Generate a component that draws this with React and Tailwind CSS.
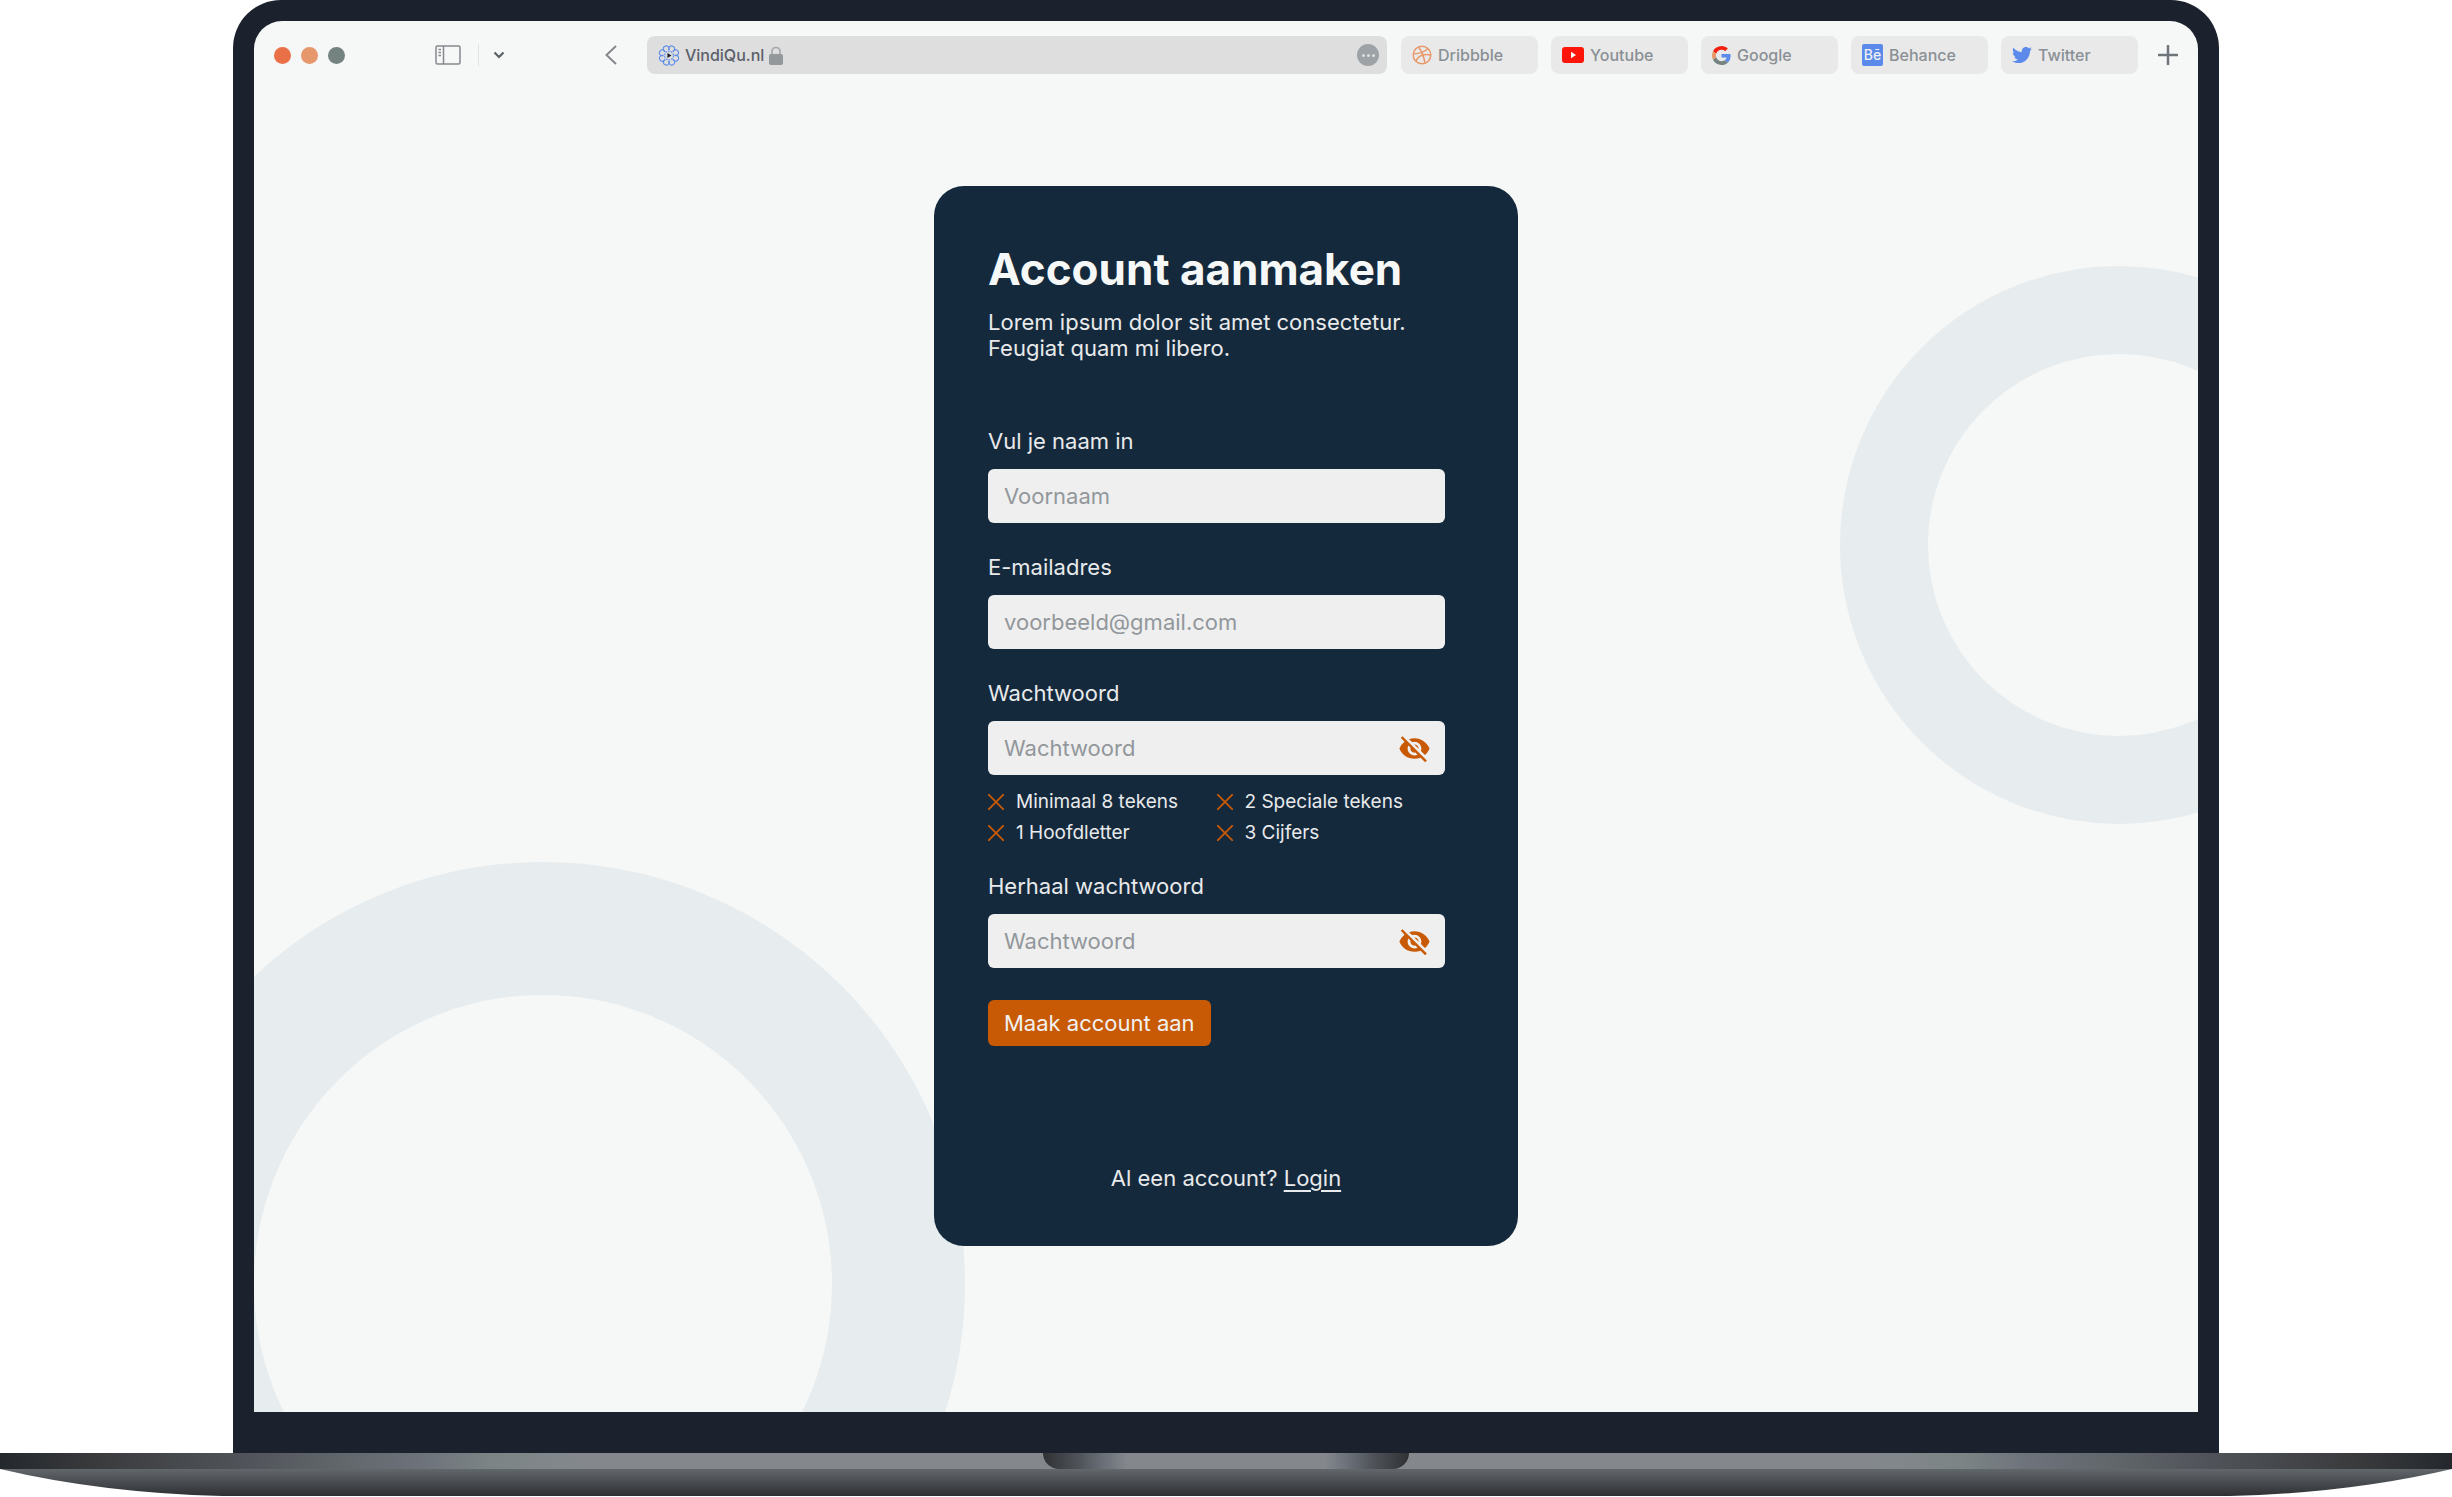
import { useState } from "react";
import { MdVisibilityOff, MdVisibility } from "react-icons/md";
import { FaTwitter } from "react-icons/fa";

function AtomIcon() {
  return (
    <svg viewBox="0 0 24 24" className="h-[23px] w-[22px] shrink-0" fill="none" stroke="#5b8aea" strokeWidth="1.2" aria-hidden="true">
      {[22, 67, 112, 157, 202, 247, 292, 337].map((a) => (
        <path key={a} d="M9.400 6.500C7.800 3 9.500 1 12 1s4.200 2 2.600 5.500" transform={`rotate(${a} 12 12)`} />
      ))}
      <circle cx="12" cy="12" r="4.800" strokeDasharray="2 1" />
      <path d="M10.300 9.200v5.600l4.400-2.800z" fill="#1b212d" stroke="none" />
    </svg>
  );
}

function LockIcon() {
  return (
    <svg viewBox="0 0 14 19" className="ml-[5px] h-[19px] w-[14px] shrink-0" aria-hidden="true">
      <path d="M3 9V5.500a4 4 0 0 1 8 0V9" fill="none" stroke="#a3a7aa" strokeWidth="1.600" />
      <rect y="8" width="14" height="11" rx="2" fill="#93989b" />
    </svg>
  );
}

function DribbbleIcon() {
  return (
    <svg viewBox="0 0 20 20" className="size-5 shrink-0" fill="none" stroke="#e8996a" strokeWidth="1.5" aria-hidden="true">
      <circle cx="10" cy="10" r="8.8" />
      <path d="M6.500 2c3 3.800 5.200 8.600 6.500 15.900M1.300 8.800c6.600.1 11-1.200 14.500-5.200M3.800 16.200c2.700-5.200 8-7.700 15-6" />
    </svg>
  );
}

function YoutubeIcon() {
  return (
    <svg viewBox="0 0 22 16" className="h-4 w-[22px] shrink-0" aria-hidden="true">
      <rect width="22" height="16" rx="3" fill="#ff1409" />
      <path d="M9 4.800v6.400l5-3.200z" fill="#fff" />
    </svg>
  );
}

function GoogleIcon() {
  return (
    <svg viewBox="0 0 48 48" className="size-[19px] shrink-0" aria-hidden="true">
      <path fill="#f3200f" d="M24 9.500c3.540 0 6.710 1.220 9.210 3.600l6.850-6.850C35.900 2.380 30.470 0 24 0 14.620 0 6.510 5.380 2.560 13.220l7.980 6.190C12.430 13.720 17.740 9.500 24 9.500z" />
      <path fill="#5b8aea" d="M46.980 24.550c0-1.570-.15-3.090-.38-4.550H24v9.020h12.940c-.58 2.960-2.260 5.480-4.780 7.180l7.730 6c4.510-4.180 7.090-10.360 7.090-17.650z" />
      <path fill="#e8996a" d="M10.530 28.590c-.48-1.450-.76-2.990-.76-4.590s.27-3.140.76-4.590l-7.980-6.190C.92 16.460 0 20.120 0 24c0 3.880.92 7.540 2.560 10.780l7.970-6.190z" />
      <path fill="#74837f" d="M24 48c6.480 0 11.930-2.130 15.890-5.810l-7.730-6c-2.150 1.450-4.920 2.300-8.160 2.300-6.260 0-11.570-4.220-13.470-9.910l-7.980 6.190C6.510 42.620 14.620 48 24 48z" />
    </svg>
  );
}

function BehanceIcon() {
  return (
    <span className="flex h-[22px] w-[21px] shrink-0 items-center justify-center rounded-xs bg-[#5b8aea] text-sm leading-none font-medium text-[#f1f1f1]" aria-hidden="true">
      Bē
    </span>
  );
}

const TABS = [
  { name: "Dribbble", icon: <DribbbleIcon /> },
  { name: "Youtube", icon: <YoutubeIcon /> },
  { name: "Google", icon: <GoogleIcon /> },
  { name: "Behance", icon: <BehanceIcon /> },
  { name: "Twitter", icon: <FaTwitter className="size-5 shrink-0 text-[#5b8aea]" aria-hidden="true" /> },
];

function Toolbar() {
  return (
    <header className="flex items-center pt-[15px] pr-5 pl-5">
      <div className="flex shrink-0 gap-[10px]">
        <span className="size-[17px] rounded-full bg-[#ea7048]" />
        <span className="size-[17px] rounded-full bg-[#e6976b]" />
        <span className="size-[17px] rounded-full bg-[#74837f]" />
      </div>
      <button type="button" aria-label="Zijbalk" className="ml-[90px] shrink-0">
        <svg viewBox="0 0 26 20" className="h-5 w-[26px]" fill="none" stroke="#85898e" strokeWidth="1.500">
          <rect x="1" y="1" width="24" height="18" rx="1.500" />
          <path d="M8.500 1v18M3.500 4.500h2.500M3.500 7.500h2.500M3.500 10.500h2.500" />
        </svg>
      </button>
      <span className="ml-[17px] h-[22px] w-px shrink-0 bg-[#e2e4e4]" />
      <button type="button" aria-label="Tabgroepen" className="ml-[14px] shrink-0">
        <svg viewBox="0 0 12 8" className="h-2 w-3" fill="none" stroke="#5c6067" strokeWidth="2.200">
          <path d="M1.500 1.500L6 6l4.500-4.500" />
        </svg>
      </button>
      <button type="button" aria-label="Vorige" className="ml-[100px] shrink-0">
        <svg viewBox="0 0 12 20" className="h-5 w-3" fill="none" stroke="#85898e" strokeWidth="2">
          <path d="M11 1L1.500 10L11 19" />
        </svg>
      </button>
      <div className="ml-[30px] flex h-[38px] min-w-0 flex-1 items-center rounded-lg bg-[#dedede] pr-2 pl-[11px] text-base font-medium text-[#5a6069]">
        <AtomIcon />
        <span className="ml-[5px]">VindiQu.nl</span>
        <LockIcon />
        <button type="button" aria-label="Meer" className="ml-auto flex size-[22px] shrink-0 items-center justify-center gap-[2px] rounded-full bg-[#9da2a6]">
          <span className="size-[3px] rounded-full bg-[#dedede]" />
          <span className="size-[3px] rounded-full bg-[#dedede]" />
          <span className="size-[3px] rounded-full bg-[#dedede]" />
        </button>
      </div>
      <nav className="ml-[14px] flex shrink-0 gap-[13px]">
        {TABS.map((t) => (
          <a key={t.name} href="#" className="flex h-[38px] w-[137px] items-center gap-[6px] rounded-lg bg-[#e9e9e9] pl-[11px] text-base font-medium text-[#8a9095]">
            {t.icon}
            {t.name}
          </a>
        ))}
      </nav>
      <button type="button" aria-label="Nieuw tabblad" className="ml-5 shrink-0">
        <svg viewBox="0 0 20 20" className="size-5" stroke="#70757c" strokeWidth="2.500">
          <path d="M10 0v20M0 10h20" />
        </svg>
      </button>
    </header>
  );
}

function Field({ id, label, placeholder, type = "text" }) {
  const [shown, setShown] = useState(false);
  const secret = type === "password";
  return (
    <div className="flex flex-col gap-4">
      <label htmlFor={id} className="leading-6">{label}</label>
      <div className="relative">
        <input
          id={id}
          type={secret && shown ? "text" : type}
          placeholder={placeholder}
          className="block h-[54px] w-full rounded-md bg-[#efefef] px-4 text-[#15293d] placeholder:text-[#92979b]"
        />
        {secret && (
          <button
            type="button"
            aria-label="Toon wachtwoord"
            onClick={() => setShown(!shown)}
            className="absolute inset-y-0 right-[14px] flex items-center text-[#c85a05]"
          >
            {shown ? <MdVisibility className="size-[33px]" /> : <MdVisibilityOff className="size-[33px]" />}
          </button>
        )}
      </div>
    </div>
  );
}

const RULES = ["Minimaal 8 tekens", "2 Speciale tekens", "1 Hoofdletter", "3 Cijfers"];

function SignupCard() {
  return (
    <form className="flex w-[584px] max-w-full flex-col rounded-[30px] bg-[#15293d] px-[54px] pt-14 pb-[54px] text-[22px] text-[#e8eaeb]">
      <h1 className="text-[44px] leading-[54px] font-bold text-[#f6f8f7]">Account aanmaken</h1>
      <p className="mt-[13px] leading-[26px]">
        Lorem ipsum dolor sit amet consectetur.
        <br />
        Feugiat quam mi libero.
      </p>
      <div className="mt-[68px] mr-[19px] flex flex-col gap-8">
        <Field id="naam" label="Vul je naam in" placeholder="Voornaam" />
        <Field id="email" label="E-mailadres" placeholder="voorbeeld@gmail.com" type="email" />
        <div className="flex flex-col">
          <Field id="wachtwoord" label="Wachtwoord" placeholder="Wachtwoord" type="password" />
          <ul className="mt-[13px] mb-[27px] grid grid-cols-2 gap-y-[3px] text-[19px] leading-7">
            {RULES.map((r) => (
              <li key={r} className="flex items-center gap-3 whitespace-nowrap">
                <svg viewBox="0 0 16 16" className="size-4 shrink-0" stroke="#c85a05" strokeWidth="1.800" aria-hidden="true">
                  <path d="M0 0l16 16M16 0L0 16" />
                </svg>
                {r}
              </li>
            ))}
          </ul>
          <Field id="herhaal" label="Herhaal wachtwoord" placeholder="Wachtwoord" type="password" />
        </div>
      </div>
      <button type="submit" className="mt-8 h-[46px] self-start rounded-md bg-[#c85a05] px-4 text-[#f1f1f1]">
        Maak account aan
      </button>
      <p className="mt-[118px] text-center leading-7">
        Al een account? <a href="#" className="underline underline-offset-4">Login</a>
      </p>
    </form>
  );
}

function LaptopBase() {
  return (
    <div className="flex flex-col">
      <div className="flex h-4 justify-center bg-[linear-gradient(90deg,#24282d,#3a3b3d_4%,#50545a_10%,#62676c_14%,#6c717a_17%,#7c8485_20%,#84888d_24%,#84888d_76%,#7c8485_80%,#6c717a_83%,#62676c_86%,#50545a_90%,#3a3b3d_96%,#24282d)]">
        <div className="h-4 w-[366px] rounded-b-2xl bg-[linear-gradient(90deg,#2f3134,#50545a_10%,#6c717a_17%,#84888d_23%,#84888d_77%,#6c717a_83%,#50545a_90%,#2f3134)]" />
      </div>
      <svg viewBox="0 0 2452 27" preserveAspectRatio="none" className="h-[27px] w-full" aria-hidden="true">
        <defs>
          <linearGradient id="base" x1="0" y1="0" x2="0" y2="1">
            <stop offset="0" stopColor="#62676c" />
            <stop offset="1" stopColor="#2e3033" />
          </linearGradient>
        </defs>
        <path d="M0 0H2452Q2350 24 2230 27H222Q102 24 0 0Z" fill="url(#base)" />
      </svg>
    </div>
  );
}

export default function App() {
  return (
    <div className="bg-white font-['Inter',sans-serif]">
      <div className="mx-[9.5%] rounded-t-[48px] bg-[#1b212d] px-[21px] pt-[21px] pb-[41px]">
        <div className="relative overflow-hidden rounded-t-[28px] bg-[#f6f8f7]">
          <div className="absolute top-[245px] -right-[200px] size-[558px] rounded-full border-[88px] border-[#e7ecee]" />
          <div className="absolute -bottom-[294px] -left-[133px] size-[844px] rounded-full border-[133px] border-[#e7ecee]" />
          <div className="relative">
            <Toolbar />
            <main className="flex justify-center pt-[112px] pb-[166px]">
              <SignupCard />
            </main>
          </div>
        </div>
      </div>
      <LaptopBase />
    </div>
  );
}
